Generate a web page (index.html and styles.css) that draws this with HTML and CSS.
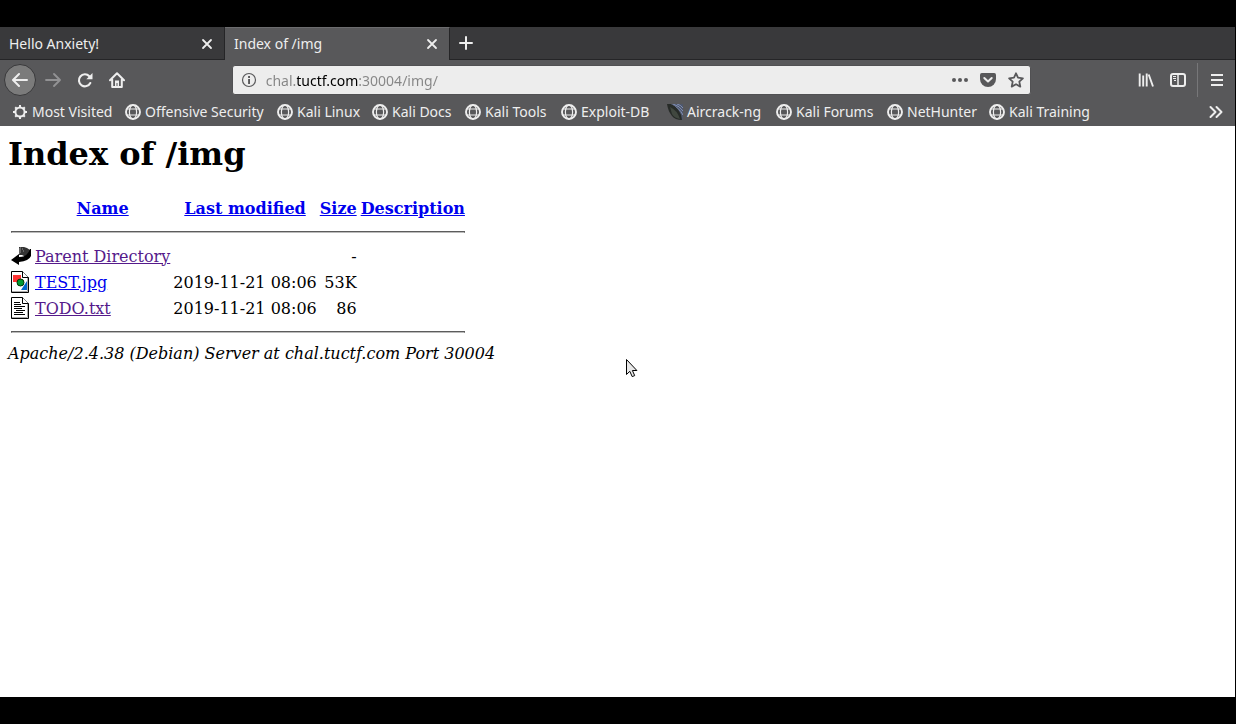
FILE: index.html
```html
<!DOCTYPE html>
<html lang="en">
<head>
<meta charset="utf-8">
<title>Index of /img</title>
<link rel="stylesheet" href="styles.css">
</head>
<body>
<svg class="defs" aria-hidden="true">
  <symbol id="close" viewBox="0 0 16 16"><path d="M4 4l8 8m0-8l-8 8" fill="none" stroke="currentColor" stroke-width="1.8" stroke-linecap="round"/></symbol>
  <symbol id="globe" viewBox="0 0 16 16"><g fill="none" stroke="currentColor"><circle cx="8" cy="8" r="7" stroke-width="1.9"/><ellipse cx="8" cy="8" rx="3.600" ry="7" stroke-width="1.200"/><path d="M2 5h12M2 11h12" stroke-width="1.200"/></g></symbol>
</svg>
<div class="window">
  <header class="chrome">
    <div class="tabs" role="tablist">
      <div class="tab"><button class="tab-title" role="tab">Hello Anxiety!</button><button class="tab-close" aria-label="Close tab"><svg class="icon"><use href="#close"/></svg></button></div>
      <div class="tab active"><button class="tab-title" role="tab" aria-selected="true">Index of /img</button><button class="tab-close" aria-label="Close tab"><svg class="icon"><use href="#close"/></svg></button></div>
      <button class="tool" aria-label="New tab"><svg class="icon" viewBox="0 0 16 16"><path d="M8 2v12M2 8h12" fill="none" stroke="currentColor" stroke-width="2" stroke-linecap="round"/></svg></button>
    </div>
    <nav class="toolbar">
      <button class="tool back" aria-label="Back"><svg class="icon" viewBox="0 0 16 16"><path d="M15 8H1.500M7 2L1 8l6 6" fill="none" stroke="currentColor" stroke-width="2" stroke-linecap="round" stroke-linejoin="round"/></svg></button>
      <button class="tool forward" aria-label="Forward" disabled><svg class="icon" viewBox="0 0 16 16"><path d="M1 8h13.500M9 2l6 6-6 6" fill="none" stroke="currentColor" stroke-width="1.800" stroke-linecap="round" stroke-linejoin="round"/></svg></button>
      <button class="tool" aria-label="Reload"><svg class="icon" viewBox="0 0 16 16"><path d="M12.300 4.200A6 6 0 1 0 13.300 11" fill="none" stroke="currentColor" stroke-width="2.100" stroke-linecap="round"/><path d="M15.500 1v6.200H9.300z" fill="currentColor"/></svg></button>
      <button class="tool" aria-label="Home"><svg class="icon" viewBox="0 0 16 16"><path d="M1 8.300L8 1.300l7 7M3.200 7.500V15h9.600V7.500" fill="none" stroke="currentColor" stroke-width="2" stroke-linecap="round" stroke-linejoin="round"/><path d="M6 8.500h4V15H6z" fill="currentColor"/><path d="M7.500 11h1v3h-1z" fill="#58585a"/></svg></button>
      <span class="space"></span>
      <div class="urlbar">
        <svg class="icon" viewBox="0 0 16 16"><circle cx="8" cy="8" r="6.500" fill="none" stroke="currentColor" stroke-width="1.200"/><path d="M7.100 7h1.900v5H7.100zM7.100 4h1.900v1.900H7.100z" fill="currentColor"/></svg>
        <input class="url" type="text" value="chal.tuctf.com:30004/img/" aria-label="Address" spellcheck="false">
        <button class="page-action" aria-label="Page actions"><svg class="icon" viewBox="0 0 16 16"><g fill="currentColor"><circle cx="2" cy="8" r="2"/><circle cx="8" cy="8" r="2"/><circle cx="14" cy="8" r="2"/></g></svg></button>
        <button class="page-action" aria-label="Save to Pocket"><svg class="icon" viewBox="0 0 16 16"><path d="M1.800 1h12.400Q16 1 16 3v4a8 8 0 0 1-16 0V3Q0 1 1.800 1z" fill="currentColor"/><path d="M4.300 6L8 9.500 11.700 6" fill="none" stroke="#ededed" stroke-width="2" stroke-linecap="round" stroke-linejoin="round"/></svg></button>
        <button class="page-action" aria-label="Bookmark this page"><svg class="icon" viewBox="0 0 16 16"><path d="M8 1.300l2 4.400 4.900.6-3.600 3.300 1 5L8 12.200l-4.300 2.400 1-5L1.100 6.300 6 5.700z" fill="none" stroke="currentColor" stroke-width="1.800" stroke-linejoin="round"/></svg></button>
      </div>
      <span class="space"></span>
      <button class="tool" aria-label="Library"><svg class="icon" viewBox="0 0 16 16"><path d="M1.700 1.500v13M5.200 3.500v11M8.700 1.500v13M10.700 2.500l4.300 12" fill="none" stroke="currentColor" stroke-width="1.900"/></svg></button>
      <button class="tool" aria-label="Sidebars"><svg class="icon" viewBox="0 0 16 16"><rect x="1" y="2" width="14" height="12" rx="2" fill="none" stroke="currentColor" stroke-width="2"/><path d="M8 2v12" stroke="currentColor" stroke-width="1.500"/><path d="M3 4.500h3M3 6.500h3M4 8.500h2" stroke="currentColor"/></svg></button>
      <span class="divider"></span>
      <button class="tool" aria-label="Menu"><svg class="icon" viewBox="0 0 16 16"><path d="M2 3h12M2 8h12M2 13h12" stroke="currentColor" stroke-width="2"/></svg></button>
    </nav>
    <nav class="bookmarks">
      <a href="#"><svg class="icon" viewBox="0 0 16 16"><g fill="none" stroke="currentColor" stroke-width="2"><circle cx="8" cy="8" r="4.600"/><path d="M8 1v3M8 12v3M1 8h3M12 8h3M3.200 3.200l2 2M10.800 10.800l2 2M12.800 3.200l-2 2M5.200 10.800l-2 2"/></g></svg>Most Visited</a>
      <a href="#"><svg class="icon"><use href="#globe"/></svg>Offensive Security</a>
      <a href="#"><svg class="icon"><use href="#globe"/></svg>Kali Linux</a>
      <a href="#"><svg class="icon"><use href="#globe"/></svg>Kali Docs</a>
      <a href="#"><svg class="icon"><use href="#globe"/></svg>Kali Tools</a>
      <a href="#"><svg class="icon"><use href="#globe"/></svg>Exploit-DB</a>
      <a href="#"><svg class="icon" viewBox="0 0 16 16"><path d="M1 0h15v16h-3z" fill="#4e576b"/><path d="M3 0q9 3 13 11M6 0q7 2 10 7M10 0q4 1 6 4" stroke="#8290b5" stroke-width="1" fill="none"/><path d="M0 0h4q5 2 8 7 3 4 3 9-7 0-10-4Q1 7 0 0z" fill="#272b28"/><path d="M3 3q7 3 10 12-6-1-8-5z" fill="#414840"/></svg>Aircrack-ng</a>
      <a href="#"><svg class="icon"><use href="#globe"/></svg>Kali Forums</a>
      <a href="#"><svg class="icon"><use href="#globe"/></svg>NetHunter</a>
      <a href="#"><svg class="icon"><use href="#globe"/></svg>Kali Training</a>
      <button class="more" aria-label="More bookmarks"><svg class="icon" viewBox="0 0 16 16"><path d="M2.500 3l5 5-5 5M8.500 3l5 5-5 5" fill="none" stroke="currentColor" stroke-width="2" stroke-linecap="round" stroke-linejoin="round"/></svg></button>
    </nav>
  </header>
  <main class="page">
    <h1>Index of /img</h1>
    <table class="listing">
      <thead>
        <tr><th class="kind"></th><th><a href="#">Name</a></th><th><a href="#">Last modified</a></th><th><a href="#">Size</a></th><th><a href="#">Description</a></th></tr>
        <tr><td colspan="5"><hr></td></tr>
      </thead>
      <tbody>
        <tr>
          <td><svg class="file" viewBox="0 0 20 22"><path d="M8 2h5l3 1 3 2v7h-4l-4-2H8z" fill="#333"/><path d="M8 4h1M8 6h1M8 8h1M9 3h1M9 5h1M9 7h1M11 4h1M12 6h1" stroke="#999"/><path d="M0 15l8-6v3q6 0 8-3 2-2 3-5h1v7q-2 5-12 6v3z"/></svg></td>
          <td><a class="visited" href="#">Parent Directory</a></td><td></td><td class="num">-</td><td></td>
        </tr>
        <tr>
          <td><svg class="file" viewBox="0 0 20 22"><path d="M.5.500h11l6 6v15H.5z" fill="#fff" stroke="#000"/><path d="M11.500.500v6h6" fill="#fff" stroke="#000"/><path d="M16.500 7v13.500H1" fill="none" stroke="#aaa"/><path d="M2 4h8v7H2z" fill="#f33"/><path d="M10 19l6-9v9z" fill="#06c"/><circle cx="9.500" cy="11.500" r="3.500" fill="#093" stroke="#030"/></svg></td>
          <td><a href="#">TEST.jpg</a></td><td class="date">2019-11-21 08:06</td><td class="num">53K</td><td></td>
        </tr>
        <tr>
          <td><svg class="file" viewBox="0 0 20 22"><path d="M.5.500h11l6 6v15H.5z" fill="#fff" stroke="#000"/><path d="M11.500.500v6h6" fill="#fff" stroke="#000"/><path d="M16.500 7v13.500H1" fill="none" stroke="#aaa"/><path d="M3 5.500h6M3 7.500h7M3 9.500h11M3 11.500h8M5 13.500h9M3 15.500h9M3 17.500h11" stroke="#000"/></svg></td>
          <td><a class="visited" href="#">TODO.txt</a></td><td class="date">2019-11-21 08:06</td><td class="num">86</td><td></td>
        </tr>
        <tr><td colspan="5"><hr></td></tr>
      </tbody>
    </table>
    <address>Apache/2.4.38 (Debian) Server at chal.tuctf.com Port 30004</address>
    <svg class="cursor" viewBox="0 0 14 21"><path d="M1.500 1.500v15l3.300-3.200 2.400 5.300 2.500-1-2.300-5.100h4.500z" fill="#e8e8e8" stroke="#000" stroke-linejoin="round"/></svg>
  </main>
</div>
</body>
</html>
```
FILE: styles.css
```css
* { box-sizing: border-box; }
body { margin: 0; background: #000; }
.defs { position: absolute; width: 0; height: 0; }
.window {
  display: flex;
  flex-direction: column;
  min-height: 100vh;
  padding: 27px 1px 27px 0;
}
.chrome {
  background: #58585a;
  color: #eee;
  font: 14px/20px "Noto Sans", sans-serif;
}
button {
  margin: 0;
  padding: 0;
  border: 0;
  background: none;
  color: inherit;
  font: inherit;
}
.icon { display: block; flex: none; width: 16px; height: 16px; }

.tabs { display: flex; height: 33px; background: #39393b; }
.tabs > .tool { height: auto; border-bottom: 1px solid #252527; }
.tabs::after { content: ""; flex: 1; border-bottom: 1px solid #252527; }
.tab {
  display: flex;
  align-items: center;
  width: 225px;
  padding: 1px 9px 0;
  border-right: 1px solid #252527;
  border-bottom: 1px solid #252527;
}
.tab.active { padding-top: 0; background: #58585a; border-top: 1px solid #6c6c6e; border-bottom: 0; }
.tab-title { flex: 1; text-align: left; }

.toolbar { display: flex; align-items: center; height: 40px; padding: 0 2px 0 4px; }
.tool {
  display: flex;
  flex: none;
  align-items: center;
  justify-content: center;
  width: 32px;
  height: 32px;
}
.back { margin-right: 1px; border: 1px solid #39393b; border-radius: 50%; background: #7b7b7b; }
.forward { color: #929294; }
.space { flex: 1; }
.divider { width: 1px; height: 34px; margin: 0 3px; background: #777779; }
.urlbar {
  display: flex;
  flex: 8;
  align-items: center;
  height: 30px;
  padding: 0 0 0 8px;
  border: 1px solid #515153;
  border-radius: 3px;
  background: #ededed;
  color: #58585a;
}
.url {
  flex: 1;
  min-width: 0;
  margin-left: 9px;
  padding: 1px 0 0;
  border: 0;
  outline: 0;
  background: linear-gradient(to right, #858585 31px, #000 31px, #000 93px, #858585 93px);
  background-clip: text;
  color: transparent;
  font: inherit;
}
.page-action { display: flex; justify-content: center; width: 28px; }

.bookmarks {
  display: grid;
  grid-template-columns: 101px 140px 83px 81px 84px 94px 97px 99px 90px auto 1fr;
  align-items: center;
  gap: 12px;
  height: 26px;
  padding: 0 11px 2px 12px;
}
.bookmarks a { display: flex; align-items: center; gap: 4px; color: inherit; text-decoration: none; white-space: nowrap; }
.more { justify-self: end; }

.page {
  position: relative;
  flex: 1;
  padding: 8px;
  background: #fff;
  color: #000;
  font: 16px/19px "DejaVu Serif", serif;
}
h1 { margin: 0 0 19px; font-size: 32px; line-height: 41px; }
.listing { border-spacing: 2px; }
.listing th, .listing td { padding: 1px; }
.kind { width: 22px; height: 24px; }
.file { display: block; width: 20px; height: 22px; }
.num { text-align: right; }
.listing .date { padding: 0; white-space: nowrap; }
.listing a { color: #00e; }
.listing .visited { color: #551a8b; }
hr { height: 2px; margin: 8px 0; border: 1px solid #5c5c5c; border-bottom-color: #bbb; }
.cursor { position: absolute; left: 625px; top: 232px; width: 14px; height: 21px; }
```
